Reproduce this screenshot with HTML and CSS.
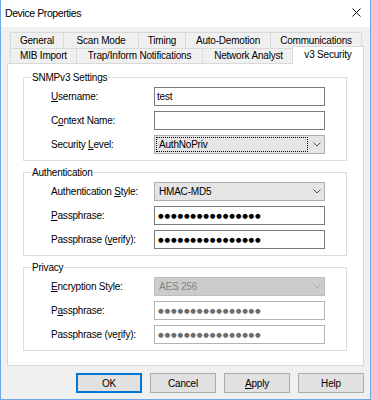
FILE: index.html
```html
<!DOCTYPE html>
<html>
<head>
<meta charset="utf-8">
<link rel="stylesheet" href="styles.css">
</head>
<body>
<div class="window">
  <div class="titlebar">
    <span class="title">Device Properties</span>
    <svg class="close" width="9" height="9" viewBox="0 0 9 9"><path d="M0.5 0.5 L8.5 8.5 M8.5 0.5 L0.5 8.5" stroke="#111" stroke-width="1" fill="none"/></svg>
  </div>
  <div class="body">
    <div class="tabs">
      <div class="tabrow">
        <div class="tab t-general">General</div>
        <div class="tab t-scan">Scan Mode</div>
        <div class="tab t-timing">Timing</div>
        <div class="tab t-auto">Auto-Demotion</div>
        <div class="tab t-comm">Communications</div>
      </div>
      <div class="tabrow front">
        <div class="tab t-mib">MIB Import</div>
        <div class="tab t-trap">Trap/Inform Notifications</div>
        <div class="tab t-net">Network Analyst</div>
        <div class="tab t-v3 selected">v3 Security</div>
      </div>
    </div>
    <div class="panel">
      <div class="group">
        <div class="group-title">SNMPv3 Settings</div>
        <div class="fields">
          <span class="lbl"><u>U</u>sername:</span>
          <div class="input">test</div>
          <span class="lbl">C<u>o</u>ntext Name:</span>
          <div class="input"></div>
          <span class="lbl">Security <u>L</u>evel:</span>
          <div class="select">
            <span class="val focus">AuthNoPriv</span>
            <svg class="arrow" width="8" height="5" viewBox="0 0 8 5"><path d="M0.5 0.5 L4 4 L7.5 0.5" stroke="#555" fill="none"/></svg>
          </div>
        </div>
      </div>
      <div class="group">
        <div class="group-title">Authentication</div>
        <div class="fields">
          <span class="lbl">Authentication <u>S</u>tyle:</span>
          <div class="select">
            <span class="val">HMAC-MD5</span>
            <svg class="arrow" width="8" height="5" viewBox="0 0 8 5"><path d="M0.5 0.5 L4 4 L7.5 0.5" stroke="#555" fill="none"/></svg>
          </div>
          <span class="lbl"><u>P</u>assphrase:</span>
          <div class="input"><span class="dots">●●●●●●●●●●●●●●●●</span></div>
          <span class="lbl">Passphrase (<u>v</u>erify):</span>
          <div class="input"><span class="dots">●●●●●●●●●●●●●●●●</span></div>
        </div>
      </div>
      <div class="group">
        <div class="group-title">Privacy</div>
        <div class="fields">
          <span class="lbl"><u>E</u>ncryption Style:</span>
          <div class="select disabled">
            <span class="val">AES 256</span>
            <svg class="arrow" width="8" height="5" viewBox="0 0 8 5"><path d="M0.5 0.5 L4 4 L7.5 0.5" stroke="#b0b0b0" fill="none"/></svg>
          </div>
          <span class="lbl">P<u>a</u>ssphrase:</span>
          <div class="input light"><span class="dots grey">●●●●●●●●●●●●●●●●</span></div>
          <span class="lbl">Passphrase (ve<u>r</u>ify):</span>
          <div class="input light"><span class="dots grey">●●●●●●●●●●●●●●●●</span></div>
        </div>
      </div>
    </div>
    <div class="buttons">
      <div class="btn default">OK</div>
      <div class="btn">Cancel</div>
      <div class="btn"><u>A</u>pply</div>
      <div class="btn">Help</div>
    </div>
  </div>
</div>
</body>
</html>
```

FILE: styles.css
```css
* { box-sizing: border-box; }
html, body { margin: 0; padding: 0; }
body {
  font-family: "Liberation Sans", Arial, sans-serif;
  font-size: 10px;
  letter-spacing: -0.2px;
  color: #000;
  background: #f0f0f0;
}
.window {
  width: 371px;
  height: 400px;
  border: 1px solid #6fa8e6;
  border-top: none;
  display: flex;
  flex-direction: column;
  background: #f0f0f0;
}
.titlebar {
  height: 27px;
  flex: none;
  background: #fff;
  display: flex;
  align-items: center;
  justify-content: space-between;
  padding: 0 9px 2px 4px;
}
.title { font-size: 10.5px; letter-spacing: -0.4px; }
.close { display: block; }
.body {
  flex: 1;
  display: flex;
  flex-direction: column;
  padding: 5px 6px 6px 6px;
}
.tabs {
  height: 31px;
  padding-left: 3px;
  display: flex;
  flex-direction: column;
}
.tabrow {
  height: 16px;
  display: flex;
  align-items: flex-end;
}
.tabrow.front { height: 15px; }
.tab {
  height: 100%;
  flex: none;
  background: #f0f0f0;
  border: 1px solid #d9d9d9;
  border-bottom: none;
  margin-left: -1px;
  display: flex;
  align-items: center;
  justify-content: center;
  white-space: nowrap;
  padding-bottom: 1px;
}
.tab:first-child { margin-left: 0; }
.t-general { width: 54px; }
.t-scan { width: 76px; }
.t-timing { width: 48px; }
.t-auto { width: 86px; }
.t-comm { width: 92px; }
.t-mib { width: 67px; }
.t-trap { width: 127px; }
.t-net { width: 93px; }
.tab.selected {
  width: 72px;
  height: 18px;
  margin-left: -3px;
  margin-bottom: -1px;
  background: #fff;
  position: relative;
  z-index: 1;
  padding-bottom: 3px;
}
.panel {
  height: 303px;
  background: #fff;
  border: 1px solid #d9d9d9;
  padding: 13px 16px 14px 15px;
  display: flex;
  flex-direction: column;
  gap: 11px;
}
.group {
  height: 84px;
  border: 1px solid #dcdcdc;
}
.group-title {
  width: max-content;
  margin: -7px 0 0 7px;
  padding: 0 1px;
  line-height: 13px;
  background: #fff;
}
.fields {
  margin-top: 3px;
  padding-left: 27px;
  display: grid;
  grid-template-columns: 103px 171px;
  grid-auto-rows: 19px;
  row-gap: 5px;
  align-items: center;
}
.lbl { white-space: nowrap; }
.input {
  height: 19px;
  border: 1px solid #7a7a7a;
  background: #fff;
  padding-left: 2px;
  display: flex;
  align-items: center;
}
.input.light { border-color: #b4b4b4; }
.dots {
  font-family: "DejaVu Sans", sans-serif;
  font-size: 6.5px;
  letter-spacing: 0.8px;
  padding-left: 1px;
  color: #000;
}
.dots.grey { color: #6d6d6d; }
.select {
  height: 19px;
  border: 1px solid #adadad;
  background: #e5e5e5;
  display: flex;
  align-items: center;
}
.select .val {
  width: 152px;
  height: 15px;
  margin-left: 1px;
  padding-left: 2px;
  display: flex;
  align-items: center;
  border: 1px solid transparent;
}
.select .val.focus { border: 1px dotted #000; }
.select .arrow { margin-left: auto; margin-right: 3px; display: block; }
.select.disabled {
  background: #cccccc;
  border-color: #bfbfbf;
  color: #838383;
}
.buttons {
  margin-top: 7px;
  display: flex;
  justify-content: flex-end;
  gap: 8px;
}
.btn {
  width: 66px;
  height: 20px;
  border: 1px solid #adadad;
  background: #e1e1e1;
  display: flex;
  align-items: center;
  justify-content: center;
}
.btn.default { border: 2px solid #0078d7; }
```
